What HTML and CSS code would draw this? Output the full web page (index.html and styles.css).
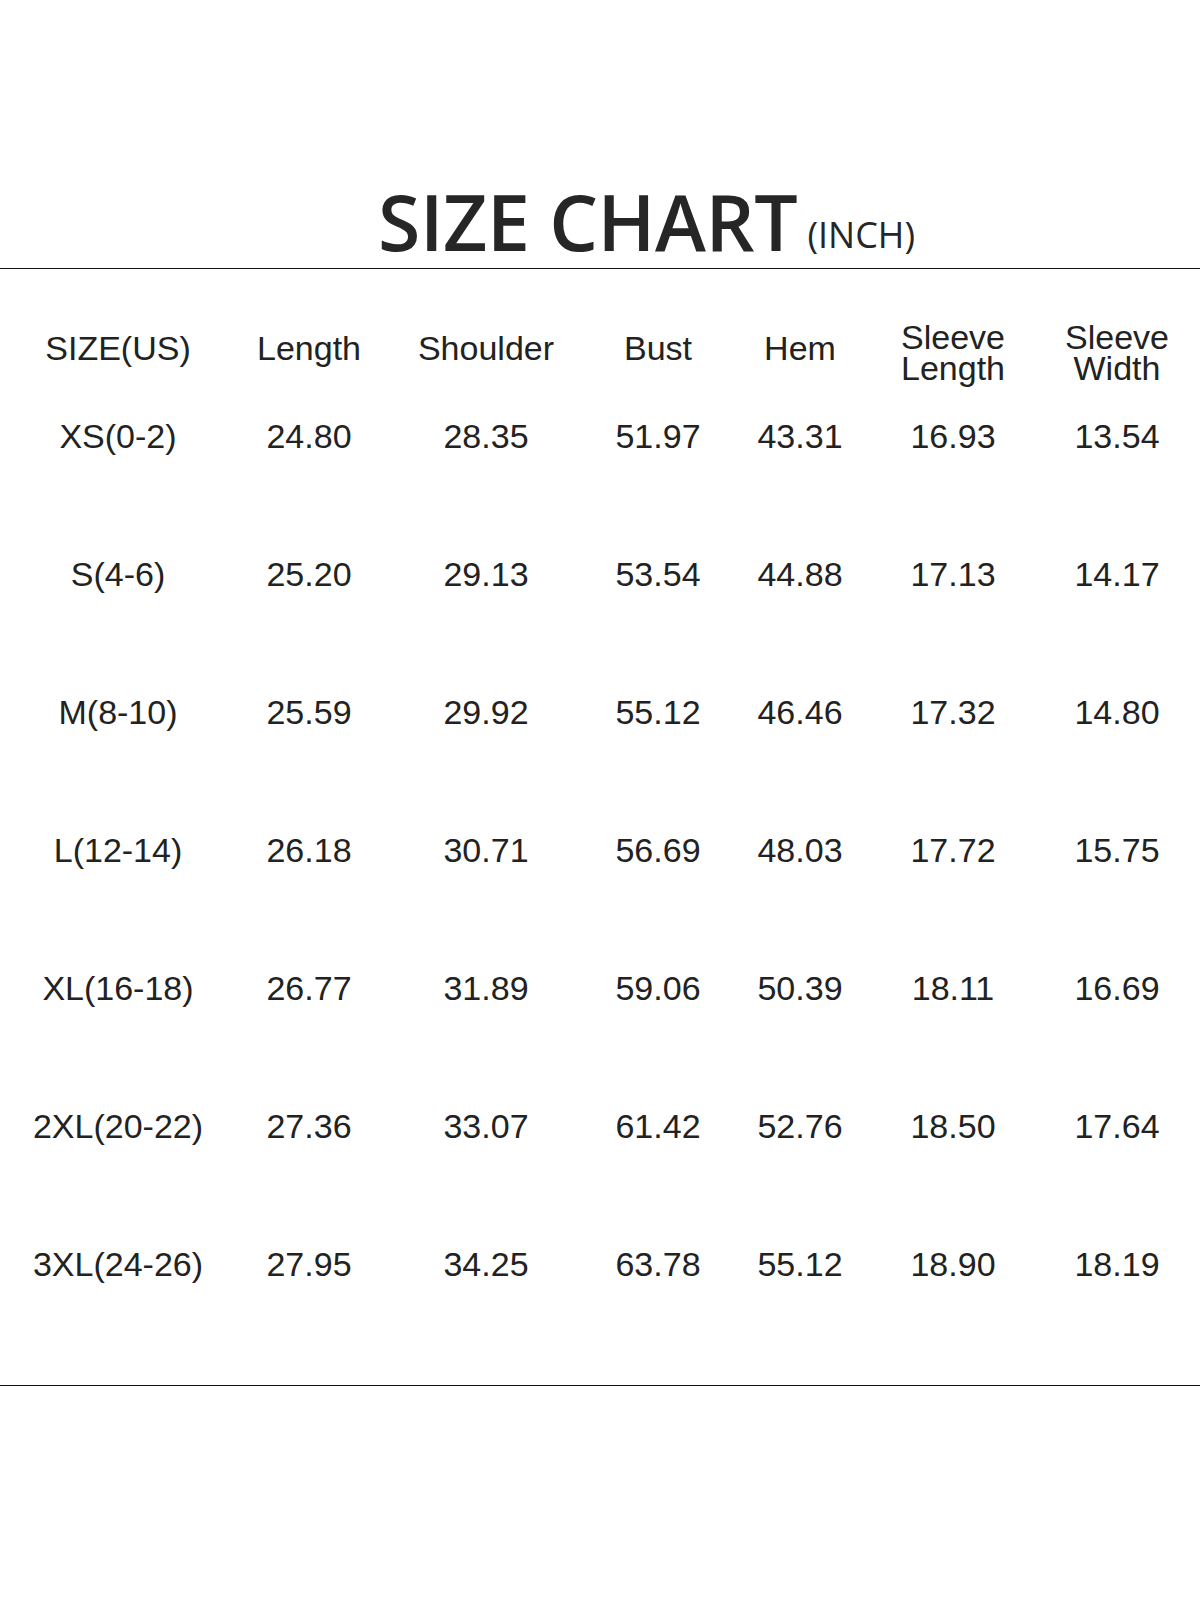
FILE: index.html
```html
<!DOCTYPE html>
<html lang="en">
<head>
<meta charset="utf-8">
<title>Size Chart</title>
<link rel="stylesheet" href="styles.css">
</head>
<body>
<div class="page">
  <header class="title-bar">
    <h1 class="title">SIZE CHART<span class="unit">(INCH)</span></h1>
  </header>
  <section class="chart">
    <div class="row head">
      <div class="cell">SIZE(US)</div>
      <div class="cell">Length</div>
      <div class="cell">Shoulder</div>
      <div class="cell">Bust</div>
      <div class="cell">Hem</div>
      <div class="cell two">Sleeve<br>Length</div>
      <div class="cell two">Sleeve<br>Width</div>
    </div>
    <div class="row data">
      <div class="cell">XS(0-2)</div><div class="cell">24.80</div><div class="cell">28.35</div><div class="cell">51.97</div><div class="cell">43.31</div><div class="cell">16.93</div><div class="cell">13.54</div>
    </div>
    <div class="row data">
      <div class="cell">S(4-6)</div><div class="cell">25.20</div><div class="cell">29.13</div><div class="cell">53.54</div><div class="cell">44.88</div><div class="cell">17.13</div><div class="cell">14.17</div>
    </div>
    <div class="row data">
      <div class="cell">M(8-10)</div><div class="cell">25.59</div><div class="cell">29.92</div><div class="cell">55.12</div><div class="cell">46.46</div><div class="cell">17.32</div><div class="cell">14.80</div>
    </div>
    <div class="row data">
      <div class="cell">L(12-14)</div><div class="cell">26.18</div><div class="cell">30.71</div><div class="cell">56.69</div><div class="cell">48.03</div><div class="cell">17.72</div><div class="cell">15.75</div>
    </div>
    <div class="row data">
      <div class="cell">XL(16-18)</div><div class="cell">26.77</div><div class="cell">31.89</div><div class="cell">59.06</div><div class="cell">50.39</div><div class="cell">18.11</div><div class="cell">16.69</div>
    </div>
    <div class="row data">
      <div class="cell">2XL(20-22)</div><div class="cell">27.36</div><div class="cell">33.07</div><div class="cell">61.42</div><div class="cell">52.76</div><div class="cell">18.50</div><div class="cell">17.64</div>
    </div>
    <div class="row data">
      <div class="cell">3XL(24-26)</div><div class="cell">27.95</div><div class="cell">34.25</div><div class="cell">63.78</div><div class="cell">55.12</div><div class="cell">18.90</div><div class="cell">18.19</div>
    </div>
  </section>
</div>
</body>
</html>
```

FILE: styles.css
```css
html, body {
  margin: 0;
  padding: 0;
  background: #ffffff;
}

.page {
  width: 1200px;
  min-height: 1600px;
  background: #ffffff;
  color: #222222;
  font-family: "Liberation Sans", Arial, sans-serif;
}

.title-bar {
  padding-top: 183px;
  padding-bottom: 8px;
  border-bottom: 1.5px solid #111111;
}

.title {
  margin: 0;
  padding-left: 378px;
  font-family: "Open Sans", "Noto Sans", sans-serif;
  font-weight: 600;
  font-size: 77px;
  line-height: 77px;
  height: 77px;
  letter-spacing: -0.4px;
  color: #262626;
  white-space: nowrap;
}

.unit {
  font-weight: 400;
  font-size: 36px;
  line-height: 36px;
  letter-spacing: 0;
  margin-left: 10px;
  vertical-align: 3px;
}

.chart {
  padding-top: 43px;
  padding-left: 18px;
  padding-bottom: 35px;
  border-bottom: 1.5px solid #111111;
}

.row {
  display: grid;
  grid-template-columns: 200px 182px 172px 172px 112px 194px 134px;
  font-size: 34px;
}

.cell {
  text-align: center;
  white-space: nowrap;
}

.head {
  align-items: center;
  line-height: 33px;
}

.head .two {
  line-height: 31px;
  padding-top: 10px;
}

.data {
  height: 138px;
  box-sizing: border-box;
  padding-top: 32px;
  line-height: 40px;
}
```
